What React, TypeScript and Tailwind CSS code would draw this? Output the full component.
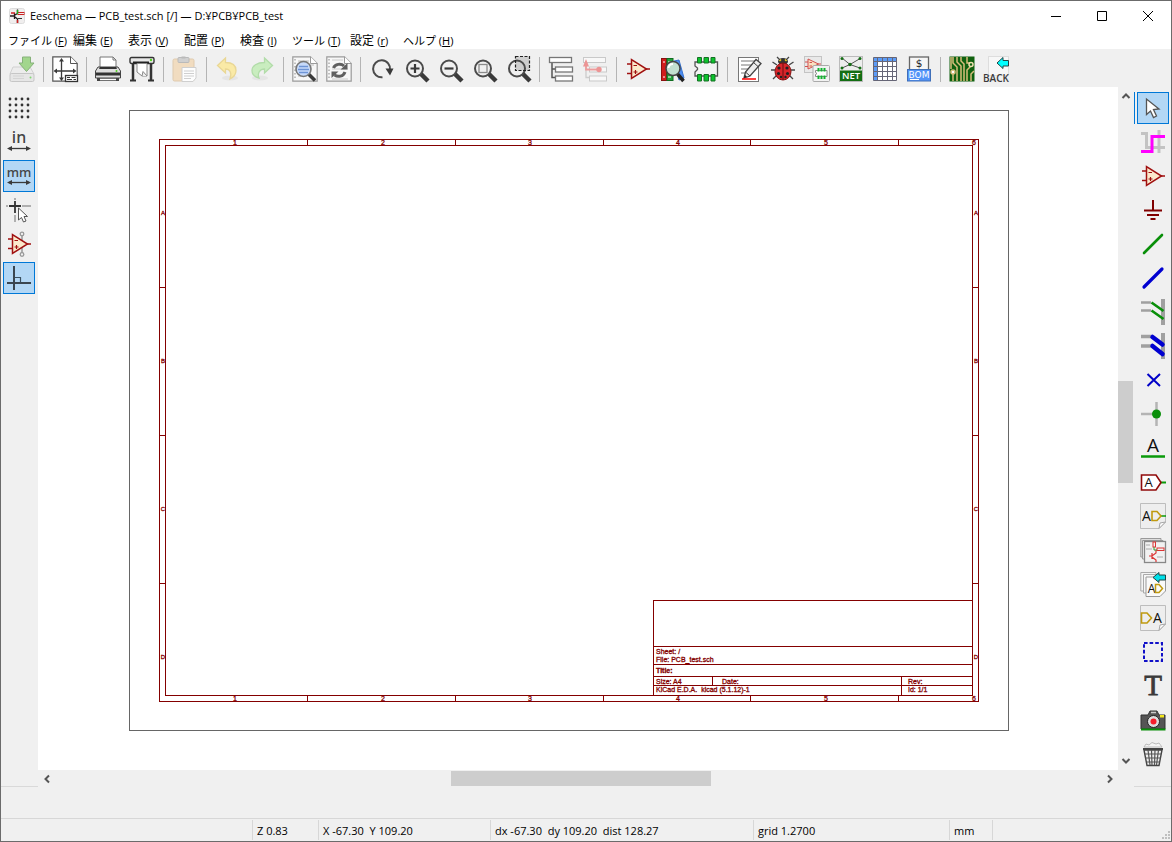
import type { ReactNode } from "react";

const DARK = "#3a3a3a";
const RED = "#a01010";
const MAROON = "#840000";

function Icon({ children }: { children: ReactNode }) {
  return (
    <svg viewBox="0 0 26 26" className="size-[26px] shrink-0 overflow-visible" fill="none" aria-hidden="true">
      {children}
    </svg>
  );
}

function Paper({ stroke = "#9a9a9a", fill = "#f7f7f7" }: { stroke?: string; fill?: string }) {
  return (
    <>
      <path d="M.8.8H18.500L25.200 7.500V25.200H.8Z" fill={fill} stroke={stroke} strokeWidth="1.200" />
      <path d="M18.500.8V7.500H25.200" fill="#fff" stroke={stroke} />
    </>
  );
}

function NotePaper() {
  return (
    <>
      <path d="M.5.5H25.500V19L19 25.500H.5Z" fill="#eee" stroke="#bdbdbd" />
      <path d="M25.500 19L19 25.500L20 20Z" fill="#fff" stroke="#a5a5a5" />
    </>
  );
}

function Lens({ children }: { children?: ReactNode }) {
  return (
    <>
      <path d="M18 18L25 25" stroke={DARK} strokeWidth="4.500" />
      <circle cx="12" cy="12.500" r="8" stroke="#4b4b4b" strokeWidth="2" />
      {children}
    </>
  );
}

function OpAmp() {
  return (
    <>
      <path d="M2 8H7M2 17.500H7M21 13H25" stroke={RED} strokeWidth="1.300" />
      <path d="M6.500 3.500V22.500L21.500 13Z" fill="#fbe9cc" stroke={RED} strokeWidth="1.500" />
      <path d="M8.500 9.500H12M8.500 16H12.500M10.500 14V18" stroke={RED} strokeWidth="1.200" />
    </>
  );
}

function MeasureArrow() {
  return (
    <>
      <path d="M3 19.500H23" stroke={DARK} strokeWidth="1.300" />
      <path d="M1 19.500L6 17V22ZM25 19.500L20 17V22Z" fill={DARK} />
    </>
  );
}

const icons = {
  save: (
    <Icon>
      <path d="M4 11H21L25 18H1Z" fill="#ececec" stroke="#d0d0d0" />
      <rect x="1" y="17.500" width="24" height="8" rx="1.500" fill="#e6e6e6" stroke="#c6c6c6" />
      <path d="M4 20H15M4 22.500H15" stroke="#d4d4d4" />
      <circle cx="21.500" cy="21.500" r="1" fill="#7fd873" />
      <path d="M13.500 1H21.500V7H25L17.500 15.500L10 7H13.500Z" fill="#a2d68d" stroke="#86b17a" />
    </Icon>
  ),
  page: (
    <Icon>
      <Paper stroke="#555" fill="#fff" />
      <path d="M3 15H22M9.500 4V23" stroke={DARK} strokeWidth="1.300" />
      <path d="M1.500 15L5 12.500V17.500ZM24.500 15L21 12.500V17.500ZM9.500 2L7 5.500H12ZM9.500 25L7 21.500H12Z" fill={DARK} />
      <rect x="13.500" y="19.500" width="12" height="6" fill="#fff" stroke="#333" strokeWidth="1.300" />
      <path d="M15 21.500H18M19.500 21.500H23.500M15 23.500H20M21.500 23.500H24" stroke="#333" />
    </Icon>
  ),
  print: (
    <Icon>
      <path d="M5 1H18L21 4V13H5Z" fill="#fff" stroke="#777" />
      <path d="M18 1V4H21" stroke="#777" />
      <path d="M3 11H23L25.500 15V22H.5V15Z" fill="#dedede" stroke="#444" />
      <path d="M4 13H22L21 11H5Z" fill="#333" />
      <rect x="1" y="16.500" width="24" height="3" fill="#333" />
      <circle cx="21.500" cy="15" r="1" fill="#50d020" />
      <path d="M2 22H24V25H2Z" fill="#444" />
      <path d="M5 23.500H21" stroke="#fff" strokeWidth="1.500" />
    </Icon>
  ),
  plot: (
    <Icon>
      <path d="M4 8V24M22 8V24" stroke="#333" strokeWidth="2.500" />
      <path d="M1 24.500H7M19 24.500H25" stroke="#333" strokeWidth="2" />
      <rect x="1" y="1.500" width="24" height="6" rx="1.500" fill="#e8e8e8" stroke="#333" strokeWidth="1.400" />
      <path d="M4 6.500H20" stroke="#222" strokeWidth="2" />
      <circle cx="22" cy="4" r="1.200" fill="#50d020" />
      <path d="M8 7.500H18V20H13L8 16Z" fill="#fff" stroke="#888" />
      <path d="M13 20L14 15.500L18 20" fill="#eee" stroke="#888" />
    </Icon>
  ),
  paste: (
    <Icon>
      <rect x="1" y="3" width="21" height="22" rx="1.500" fill="#f1dcc0" stroke="#dfcaae" />
      <rect x="6" y="1.500" width="11" height="5" rx="1" fill="#d0d0d0" stroke="#bababa" />
      <rect x="9.500" y=".5" width="4" height="2" fill="#bababa" />
      <path d="M10 11.500H24V22L21 25.500H10Z" fill="#fdfdfd" stroke="#cfcfcf" />
      <path d="M12 15H22M12 17.500H22M12 20H22M12 22.500H19" stroke="#cfcfcf" />
    </Icon>
  ),
  undo: (
    <Icon>
      <ellipse cx="15" cy="22" rx="8" ry="2.500" fill="#e5e5e5" />
      <path d="M2.500 9.500L10.500 2V6.500C18 6.500 21 10 21 14.500C21 18 19 21 15 23C17 17 15 13 10.500 13V17Z" fill="#faeaa6" stroke="#e9d795" strokeWidth="1.300" />
    </Icon>
  ),
  redo: (
    <Icon>
      <ellipse cx="11" cy="22" rx="8" ry="2.500" fill="#e5e5e5" />
      <path d="M23.500 9.500L15.500 2V6.500C8 6.500 3 10 3 14.500C3 18 6 21 10 22C8 17 11 13 15.500 13V17Z" fill="#c9edbf" stroke="#b2dca9" strokeWidth="1.300" />
    </Icon>
  ),
  find: (
    <Icon>
      <Paper />
      <path d="M3 3V24" stroke="#888" strokeDasharray="1.500 2" />
      <path d="M6 5H17M6 9H22M6 20H14" stroke="#bbb" />
      <path d="M16.500 18L23 24.500" stroke={DARK} strokeWidth="3.500" />
      <circle cx="11.500" cy="13" r="7.500" fill="#c7dafa" stroke="#777" strokeWidth="1.600" />
      <path d="M7 10.500H16M6 13.500H17M7 16.500H16" stroke="#6d94d6" strokeWidth="1.500" />
    </Icon>
  ),
  replace: (
    <Icon>
      <Paper />
      <path d="M3 3V24" stroke="#888" strokeDasharray="1.500 2" />
      <path d="M6 4H17M6 13H22M6 23H22" stroke="#ccc" />
      <path d="M7.500 12C9 8 15 7 18 10M19 16C17.500 20.500 12 21.500 8.500 19" stroke="#606060" strokeWidth="3" />
      <path d="M21.500 7V13.500H14.500ZM5.500 22V15.500H12.500Z" fill="#606060" />
    </Icon>
  ),
  redraw: (
    <Icon>
      <path d="M13.500 21.300A8.500 8.500 0 1 1 21 14" stroke="#4b4b4b" strokeWidth="2" />
      <path d="M16.500 12.500H24.500L21 19.500Z" fill={DARK} />
    </Icon>
  ),
  zoomIn: (
    <Icon>
      <Lens>
        <path d="M7.500 12.500H16.500M12 8V17" stroke={DARK} strokeWidth="2.200" />
      </Lens>
    </Icon>
  ),
  zoomOut: (
    <Icon>
      <Lens>
        <path d="M7.500 12.500H16.500" stroke={DARK} strokeWidth="2.200" />
      </Lens>
    </Icon>
  ),
  zoomFit: (
    <Icon>
      <Lens>
        <rect x="8" y="8.500" width="8" height="8" stroke="#8b8b8b" strokeWidth="1.300" />
      </Lens>
    </Icon>
  ),
  zoomArea: (
    <Icon>
      <rect x="10.500" y=".5" width="14" height="14" fill="#cfcfcf" />
      <Lens />
      <rect x="10.500" y=".5" width="14" height="14" stroke="#222" strokeWidth="1.200" strokeDasharray="3 1.500" />
    </Icon>
  ),
  hierarchy: (
    <Icon>
      <path d="M4 6V21.500H8M4 13H8" stroke="#555" strokeWidth="1.500" />
      <rect x="1.500" y="1.500" width="22" height="5" fill="#fff" stroke="#777" strokeWidth="1.300" />
      <rect x="7.500" y="11" width="17" height="5" fill="#fff" stroke="#777" strokeWidth="1.300" />
      <rect x="7.500" y="20" width="17" height="5" fill="#fff" stroke="#777" strokeWidth="1.300" />
    </Icon>
  ),
  leave: (
    <Icon>
      <path d="M4 6V21.500H8" stroke="#ccc" strokeWidth="1.300" />
      <rect x="1.500" y="1.500" width="22" height="5" fill="#f8f8f8" stroke="#c9c9c9" />
      <rect x="7.500" y="11" width="17" height="5" fill="#f8f8f8" stroke="#c9c9c9" />
      <rect x="7.500" y="20" width="17" height="5" fill="#f8f8f8" stroke="#c9c9c9" />
      <path d="M4 9V13.500H16" stroke="#ec9d9d" strokeWidth="1.800" />
      <path d="M4 3L1 10.500H7Z" fill="#ec9494" />
      <circle cx="17" cy="13.500" r="2.700" fill="#ec9494" />
    </Icon>
  ),
  opamp: (
    <Icon>
      <OpAmp />
    </Icon>
  ),
  library: (
    <Icon>
      <rect x="2.500" y="2.500" width="5" height="22" fill="#d01c1c" stroke="#8c1010" />
      <rect x="8" y="2.500" width="6" height="22" fill="#22a33a" stroke="#0f6d20" />
      <path d="M15 5L20 4L25 22L20 24Z" fill="#4c8cf0" stroke="#3772d0" />
      <path d="M4 6H6M9 6H12M4 21H6M9 21H12" stroke="#fff" />
      <path d="M18.500 18L24.500 25" stroke="#222" strokeWidth="3.500" />
      <circle cx="14" cy="12.500" r="7" fill="#c2dfd0" stroke="#444" strokeWidth="1.500" />
      <path d="M9.500 12A4.500 4.500 0 0 1 14 8" stroke="#fff" strokeWidth="2" />
    </Icon>
  ),
  footprint: (
    <Icon>
      <path d="M2 6H24.500V20H2V16L4.500 13.500V12L2 10Z" fill="#f4f4f4" stroke="#555" strokeWidth="1.300" />
      <path d="M4.500 1.500H8.500V7H4.500ZM11 1.500H15.500V7H11ZM18 1.500H22V7H18ZM4.500 18.500H8.500V25H4.500ZM11 18.500H15.500V25H11ZM18 18.500H22V25H18Z" fill="#0cc32c" stroke="#147024" />
    </Icon>
  ),
  annotate: (
    <Icon>
      <rect x="2.500" y="1.500" width="20" height="24" fill="#fff" stroke="#777" />
      <path d="M5 5H20M5 9H17M5 13H13M5 17H9" stroke="#777" />
      <path d="M8 22L9.500 16L20 3.500L25 7.500L14 20Z" fill="#eee" stroke="#444" strokeWidth="1.300" />
      <path d="M9.500 16L14 20M17.500 6.500L22 10.500" stroke="#444" />
      <path d="M8 22L9 19L11 20.500Z" fill="#222" />
      <path d="M6 23H20" stroke="red" strokeWidth="1.500" />
    </Icon>
  ),
  erc: (
    <Icon>
      <path d="M7 9L2.500 6M19 9L23.500 6M5 14H1M21 14H25M7 19L3 23M19 19L23 23M10 4L7 1M16 4L19 1" stroke="#444" strokeWidth="1.300" />
      <ellipse cx="13" cy="5.500" rx="5" ry="3.500" fill="#333" />
      <path d="M9.500 5L11 3.500M15 3.500L16.500 5" stroke="#f0d020" strokeWidth="1.500" />
      <ellipse cx="13" cy="15.500" rx="8" ry="8.500" fill="#d8242a" stroke="#811" />
      <path d="M13 7V24" stroke="#611" />
      <g fill="#222">
        <circle cx="9" cy="12" r="1.600" />
        <circle cx="17" cy="12" r="1.600" />
        <circle cx="8.500" cy="17.500" r="1.600" />
        <circle cx="17.500" cy="17.500" r="1.600" />
        <circle cx="11" cy="21" r="1.200" />
        <circle cx="15.500" cy="21" r="1.200" />
      </g>
    </Icon>
  ),
  assign: (
    <Icon>
      <rect x=".5" y=".5" width="17" height="16" fill="#e9e9e9" stroke="#c4c4c4" />
      <path d="M4 3V13L14.500 8ZM1 6H4M1 10.500H4M14 8H17" fill="#fbe0c0" stroke="#d25050" />
      <path d="M5.500 6.500H8M5.500 10H8" stroke="#d25050" />
      <rect x="9" y="9.500" width="16.500" height="16" rx="1" fill="#f2f2f2" stroke="#aaa" />
      <path d="M11.500 14.500H23V20.500H11.500V18.500L13 17.500L11.500 16.500Z" fill="#fff" stroke="#888" />
      <path d="M14.500 12V15.500M17.500 12V15.500M20.500 12V15.500M14.500 19.500V23M17.500 19.500V23M20.500 19.500V23" stroke="#12b530" strokeWidth="2" />
    </Icon>
  ),
  netlist: (
    <Icon>
      <rect x="1.500" y=".5" width="23" height="25" fill="#eee" stroke="#bbb" />
      <path d="M4 2L12 8.500L23 2M4 12L12 8.500L22 12" stroke="#555" />
      <g fill="#146e14">
        <circle cx="4" cy="2.500" r="1.500" />
        <circle cx="22" cy="2.500" r="1.500" />
        <circle cx="12" cy="8.500" r="1.700" />
        <circle cx="4" cy="12" r="1.500" />
        <circle cx="22" cy="12" r="1.500" />
        <rect x="2" y="14.500" width="22" height="10.500" />
      </g>
      <text x="13" y="23.300" textAnchor="middle" fill="#fff" fontSize="9.500" fontWeight="600" fontFamily="Open Sans, sans-serif">NET</text>
    </Icon>
  ),
  table: (
    <Icon>
      <rect x="1.500" y="1.500" width="23" height="23" fill="#fff" />
      <path d="M1.500 1.500H24.500V5.500H5.500V24.500H1.500Z" fill="#5c9cf8" />
      <path d="M1.500 1.500H24.500V24.500H1.500ZM5.500 1.500V24.500M10.500 1.500V24.500M15.500 1.500V24.500M20.500 1.500V24.500M1.500 5.500H24.500M1.500 10.500H24.500M1.500 15.500H24.500M1.500 20.500H24.500" stroke="#667" />
    </Icon>
  ),
  bom: (
    <Icon>
      <rect x="3.500" y="1" width="19" height="13" fill="#f6f6f6" stroke="#666" strokeWidth="1.300" />
      <text x="13" y="11" textAnchor="middle" fill="#222" fontSize="10.500" fontFamily="DejaVu Sans, sans-serif">$</text>
      <rect x="1.500" y="13.500" width="23" height="11.500" fill="#5494f8" stroke="#3f6fb8" />
      <text x="13" y="22" textAnchor="middle" fill="#fff" fontSize="9" fontFamily="DejaVu Sans, sans-serif">BOM</text>
      <path d="M4 23.500H13" stroke="#fff" />
    </Icon>
  ),
  pcb: (
    <Icon>
      <rect x=".5" y=".5" width="25" height="25" fill="#10610f" />
      <path d="M4 1V7L8 11V25M8 1V6L12 10V25M12 1V5L15 8V25M18 25V14L22 10M22 25V18L25 15M18 1V7H21M2 1V13M4 17V25" stroke="#d8bd7c" strokeWidth="1.500" />
      <circle cx="22" cy="8.500" r="2" fill="#10610f" stroke="#efe0b0" strokeWidth="1.500" />
      <circle cx="4" cy="16" r="2" fill="#fff" stroke="#d8bd7c" strokeWidth="1.500" />
    </Icon>
  ),
  back: (
    <Icon>
      <rect x="5.500" y=".5" width="20" height="19" fill="#f7f7f7" stroke="#ddd" />
      <path d="M14 7L20 1.500V4.500H25.500V10H20V12.500Z" fill="#0ff" stroke="#244" />
      <text x="13" y="25.500" textAnchor="middle" fill="#3b3b3b" fontSize="10" fontWeight="600" fontFamily="Open Sans, sans-serif">BACK</text>
    </Icon>
  ),
  grid: (
    <Icon>
      {[4, 10, 16, 22].map((y) =>
        [4, 10, 16, 22].map((x) => <circle key={`${x}-${y}`} cx={x} cy={y} r="1.400" fill="#333" />),
      )}
    </Icon>
  ),
  inch: (
    <Icon>
      <text x="13" y="14" textAnchor="middle" fill="#444" fontSize="16" fontFamily="Noto Sans, sans-serif" fontWeight="500">in</text>
      <MeasureArrow />
    </Icon>
  ),
  mm: (
    <Icon>
      <text x="13" y="14" textAnchor="middle" fill="#444" fontSize="13" fontFamily="Noto Sans, sans-serif" fontWeight="500">mm</text>
      <MeasureArrow />
    </Icon>
  ),
  cursorShape: (
    <Icon>
      <path d="M0 9H2M16 9H25M9 18V25M9 1V3" stroke="#999" strokeWidth="1.500" />
      <path d="M3 9H15M9 4V16" stroke="#333" strokeWidth="1.800" />
      <path d="M12.500 11V23L15.500 20.500L17.500 25L20 24L18 19.500H21.500Z" fill="#fff" stroke="#555" />
    </Icon>
  ),
  hiddenPins: (
    <Icon>
      <path d="M16 4V22" stroke="#999" strokeWidth="1.500" />
      <circle cx="16" cy="3" r="1.800" stroke="#999" strokeWidth="1.300" />
      <circle cx="16" cy="23.500" r="1.800" stroke="#999" strokeWidth="1.300" />
      <OpAmp />
    </Icon>
  ),
  ortho: (
    <Icon>
      <path d="M8 1V25M1 18H25" stroke="#3b4650" strokeWidth="2" />
      <path d="M9 12.500H14.500V17.500" stroke="#3b5060" strokeWidth="1.200" />
    </Icon>
  ),
  select: (
    <Icon>
      <path d="M6.500 4V19.500L10.500 16L13.500 22.500L16.500 21L13.500 14.500L19 14Z" fill="#fff" stroke="#555" strokeWidth="1.300" />
    </Icon>
  ),
  highlight: (
    <Icon>
      <path d="M1 4.500H6.500V18.500H25M19 1V24" stroke="#c3c3c3" strokeWidth="3" />
      <path d="M1 22.500H12V7.500H25" stroke="#f0f" strokeWidth="3" />
    </Icon>
  ),
  power: (
    <Icon>
      <path d="M13 3V14M4 13.500H22M7 18H19M10.500 22H15.500" stroke="#800000" strokeWidth="2" />
    </Icon>
  ),
  wire: (
    <Icon>
      <path d="M4 22L22 4" stroke="#098f09" strokeWidth="2.600" strokeLinecap="round" />
    </Icon>
  ),
  bus: (
    <Icon>
      <path d="M4 22L22 4" stroke="#0000d0" strokeWidth="3.200" strokeLinecap="round" />
    </Icon>
  ),
  wireEntry: (
    <Icon>
      <path d="M1 3.500H11M1 11.500H11" stroke="#a0a0a0" strokeWidth="2.500" />
      <path d="M23 0V26" stroke="#a0a0a0" strokeWidth="4" />
      <path d="M11.500 3.500L23.500 12M11.500 11.500L23.500 20" stroke="#098f09" strokeWidth="2.600" />
    </Icon>
  ),
  busEntry: (
    <Icon>
      <path d="M1 3.500H11M1 13H11" stroke="#a0a0a0" strokeWidth="3.500" />
      <path d="M23 0V26" stroke="#a0a0a0" strokeWidth="4" />
      <path d="M12.500 4L22.500 11.500M12.500 13L22.500 21" stroke="#0000d0" strokeWidth="4.500" strokeLinecap="round" />
    </Icon>
  ),
  noConnect: (
    <Icon>
      <path d="M7.500 7L20 19M20 7L7.500 19" stroke="#0000c8" strokeWidth="2" />
    </Icon>
  ),
  junction: (
    <Icon>
      <path d="M1 13H16M16.500 1V25" stroke="#b4b4b4" strokeWidth="2.500" />
      <circle cx="16.500" cy="13" r="4.500" fill="#0a8f0a" />
    </Icon>
  ),
  label: (
    <Icon>
      <text x="13" y="17" textAnchor="middle" fill="#111" fontSize="19" fontFamily="Open Sans, sans-serif">A</text>
      <path d="M1 21.500H25" stroke="#0a9a0a" strokeWidth="2.500" />
    </Icon>
  ),
  globalLabel: (
    <Icon>
      <path d="M21 13.500H26" stroke="#0a9a0a" strokeWidth="2" />
      <path d="M1.500 6H16L21 13.500L16 21H1.500Z" fill="#fff" stroke="#900a0a" strokeWidth="1.600" />
      <text x="8.500" y="18" textAnchor="middle" fill="#111" fontSize="13" fontFamily="Open Sans, sans-serif">A</text>
    </Icon>
  ),
  hierLabel: (
    <Icon>
      <NotePaper />
      <text x="6.500" y="18" textAnchor="middle" fill="#111" fontSize="14" fontFamily="Open Sans, sans-serif">A</text>
      <path d="M21 13H26" stroke="#0a9a0a" strokeWidth="1.500" />
      <path d="M12 8.500H17L21 13L17 17.500H12Z" stroke="#c09a10" strokeWidth="1.600" />
    </Icon>
  ),
  sheet: (
    <Icon>
      <path d="M.8 1.500H21V20H.8Z" fill="#ddd" stroke="#999" />
      <path d="M2.500 3.500H23V22H2.500Z" fill="#eee" stroke="#999" />
      <rect x="4.500" y="4.500" width="21" height="21" fill="#f1f1f1" stroke="#888" strokeWidth="1.300" />
      <path d="M12 16V22M9 19H12L16 16V13M12 20L16 23V25" stroke="#d33" strokeWidth="1.200" />
      <rect x="17" y="11" width="7" height="2.500" stroke="#d33" />
      <rect x="13" y="5" width="2.500" height="5" stroke="#d33" />
      <path d="M6 12H12M17 20H23M6 8H10" stroke="#aaa" />
      <path d="M14 10V13H17" stroke="#393" />
    </Icon>
  ),
  importLabel: (
    <Icon>
      <path d="M.8 1.500H16V20H.8Z" fill="#f4f4f4" stroke="#aaa" />
      <path d="M3.500 3.500H18V22H3.500Z" fill="#f6f6f6" stroke="#aaa" />
      <path d="M6 6H25.500V20L20 25.500H6Z" fill="#fafafa" stroke="#999" />
      <text x="11.500" y="22" textAnchor="middle" fill="#111" fontSize="12" fontFamily="Open Sans, sans-serif">A</text>
      <path d="M15.500 13.500H19L22.500 17.500L19 21.500H15.500Z" stroke="#c09a10" strokeWidth="1.500" />
      <path d="M13 6.500L19 1.500V4H25.500V9H19V11.500Z" fill="#00dfe8" stroke="#244" />
    </Icon>
  ),
  sheetPin: (
    <Icon>
      <NotePaper />
      <path d="M1.500 8H7L11.500 13L7 18H1.500Z" stroke="#c09a10" strokeWidth="1.600" />
      <text x="17.500" y="18" textAnchor="middle" fill="#111" fontSize="14" fontFamily="Open Sans, sans-serif">A</text>
    </Icon>
  ),
  dashedBox: (
    <Icon>
      <path d="M4 4H22V22H4Z" stroke="#1010c8" strokeWidth="2" strokeDasharray="3.600 2" />
    </Icon>
  ),
  text: (
    <Icon>
      <text x="13" y="22" textAnchor="middle" fill="#3a3a3a" fontSize="29" fontFamily="Liberation Serif, serif" stroke="#3a3a3a" strokeWidth=".8">T</text>
    </Icon>
  ),
  image: (
    <Icon>
      <path d="M1 8H8L10 4H17L19 8H25V22H1Z" fill="#555" stroke="#333" />
      <path d="M11 5.500H16" stroke="#ccc" strokeWidth="1.500" />
      <rect x="20" y="8" width="4" height="2.500" fill="#f3e61a" />
      <circle cx="13.500" cy="14.500" r="6" fill="#ddd" stroke="#222" />
      <circle cx="13.500" cy="14.500" r="3" fill="#f51d2b" />
      <path d="M1 22.500H25.500" stroke="#0a8f0a" strokeWidth="2" />
    </Icon>
  ),
  trash: (
    <Icon>
      <path d="M4 6L6 3L9 4L12 1.500L16 3L19 2L22 6Z" fill="#f6f6f6" stroke="#bbb" />
      <path d="M3 8H23" stroke="#444" strokeWidth="2" />
      <path d="M4 9L7 24.500H19L22 9Z" fill="#eee" stroke="#444" strokeWidth="1.400" />
      <path d="M8 9L10 24M11.500 9L12 24M15 9L14.500 24M18.500 9L16.500 24M5 13H21M5.500 17H20.500M6.500 21H20" stroke="#555" strokeWidth="1.200" />
    </Icon>
  ),
};

type IconName = keyof typeof icons;
type Tool = { icon: IconName; label: string; active?: boolean; disabled?: boolean };

const toolGroups: Tool[][] = [
  [{ icon: "save", label: "Save", disabled: true }],
  [{ icon: "page", label: "Page settings" }],
  [{ icon: "print", label: "Print" }, { icon: "plot", label: "Plot" }],
  [{ icon: "paste", label: "Paste", disabled: true }],
  [{ icon: "undo", label: "Undo", disabled: true }, { icon: "redo", label: "Redo", disabled: true }],
  [{ icon: "find", label: "Find" }, { icon: "replace", label: "Find and replace" }],
  [
    { icon: "redraw", label: "Refresh" },
    { icon: "zoomIn", label: "Zoom in" },
    { icon: "zoomOut", label: "Zoom out" },
    { icon: "zoomFit", label: "Zoom to fit" },
    { icon: "zoomArea", label: "Zoom to selection" },
  ],
  [{ icon: "hierarchy", label: "Navigate hierarchy" }, { icon: "leave", label: "Leave sheet", disabled: true }],
  [
    { icon: "opamp", label: "Symbol editor" },
    { icon: "library", label: "Symbol library browser" },
    { icon: "footprint", label: "Footprint editor" },
  ],
  [
    { icon: "annotate", label: "Annotate" },
    { icon: "erc", label: "Electrical rules check" },
    { icon: "assign", label: "Assign footprints" },
    { icon: "netlist", label: "Generate netlist" },
    { icon: "table", label: "Edit symbol fields" },
    { icon: "bom", label: "Bill of materials" },
  ],
  [{ icon: "pcb", label: "Open PCB editor" }, { icon: "back", label: "Back import" }],
];

const leftTools: Tool[] = [
  { icon: "grid", label: "Show grid" },
  { icon: "inch", label: "Inches" },
  { icon: "mm", label: "Millimeters", active: true },
  { icon: "cursorShape", label: "Cursor shape" },
  { icon: "hiddenPins", label: "Show hidden pins" },
  { icon: "ortho", label: "Horizontal and vertical wires only", active: true },
];

const rightTools: Tool[] = [
  { icon: "select", label: "Select", active: true },
  { icon: "highlight", label: "Highlight net" },
  { icon: "opamp", label: "Place symbol" },
  { icon: "power", label: "Place power port" },
  { icon: "wire", label: "Place wire" },
  { icon: "bus", label: "Place bus" },
  { icon: "wireEntry", label: "Wire to bus entry" },
  { icon: "busEntry", label: "Bus to bus entry" },
  { icon: "noConnect", label: "No connect flag" },
  { icon: "junction", label: "Place junction" },
  { icon: "label", label: "Net label" },
  { icon: "globalLabel", label: "Global label" },
  { icon: "hierLabel", label: "Hierarchical label" },
  { icon: "sheet", label: "Hierarchical sheet" },
  { icon: "importLabel", label: "Import hierarchical label" },
  { icon: "sheetPin", label: "Sheet pin" },
  { icon: "dashedBox", label: "Graphic lines" },
  { icon: "text", label: "Text" },
  { icon: "image", label: "Image" },
  { icon: "trash", label: "Delete" },
];

const menus = [
  { name: "ファイル", key: "F", className: "w-[65px] text-[11px]" },
  { name: "編集", key: "E", className: "w-[55px] text-xs" },
  { name: "表示", key: "V", className: "w-[56px] text-xs" },
  { name: "配置", key: "P", className: "w-[56px] text-xs" },
  { name: "検査", key: "I", className: "w-[52px] text-xs" },
  { name: "ツール", key: "T", className: "w-[58px] text-[11px]" },
  { name: "設定", key: "r", className: "w-[53px] text-xs" },
  { name: "ヘルプ", key: "H", className: "w-[65px] text-[11px]" },
];

const statusCells = [
  { text: "", className: "w-[251px]" },
  { text: "Z 0.83", className: "w-[66px]" },
  { text: "X -67.30  Y 109.20", className: "w-[172px]" },
  { text: "dx -67.30  dy 109.20  dist 128.27", className: "w-[263px]" },
  { text: "grid 1.2700", className: "w-[196px]" },
  { text: "mm", className: "w-[43px]" },
];

function SideButton({ tool }: { tool: Tool }) {
  const state = tool.active ? "border-[#0078d7] bg-[#b3d7f5]" : "border-transparent";
  return (
    <button
      type="button"
      aria-label={tool.label}
      aria-pressed={!!tool.active}
      className={`flex size-8 items-center justify-center border ${state}`}
    >
      {icons[tool.icon]}
    </button>
  );
}

function ScrollArrow({ label, d, className }: { label: string; d: string; className: string }) {
  return (
    <button type="button" aria-label={label} className={`flex shrink-0 items-center justify-center ${className}`}>
      <svg viewBox="0 0 10 10" className="size-2.5" fill="none" stroke="#555" strokeWidth="2" aria-hidden="true">
        <path d={d} />
      </svg>
    </button>
  );
}

function Sheet() {
  const columns = [197, 345, 492, 640, 788, 936];
  const rows = [126, 274, 422, 570];
  const rowNames = ["A", "B", "C", "D"];
  return (
    <svg viewBox="0 0 1080 683" className="h-full w-full" role="img" aria-label="Schematic sheet">
      <g fill="none" shapeRendering="crispEdges">
        <rect x="91.500" y="23.500" width="879" height="620" stroke="#666" />
        <g stroke={MAROON}>
          <rect x="121.500" y="52.500" width="819" height="562" />
          <rect x="127.500" y="58.500" width="807" height="550" />
          {[269.5, 417.5, 565.5, 712.5, 860.5].map((x) => (
            <path key={x} d={`M${x} 52V59M${x} 608V615`} />
          ))}
          {[200.5, 348.5, 496.5].map((y) => (
            <path key={y} d={`M121 ${y}H128M934 ${y}H941`} />
          ))}
          <path d="M615.500 609V513.500H935M615 559.500H935M615 577.500H935M615 589.500H935M615 598.500H935M674.500 589V599M863.500 589V609" />
        </g>
      </g>
      <g fill={MAROON} stroke={MAROON} strokeWidth="0.300" fontFamily="Liberation Sans, sans-serif" fontSize="7">
        {columns.map((x, i) => (
          <g key={x} textAnchor="middle">
            <text x={x} y="58">{i + 1}</text>
            <text x={x} y="614">{i + 1}</text>
          </g>
        ))}
        {rows.map((y, i) => (
          <g key={y} textAnchor="middle" fontSize="6">
            <text x="125" y={y + 2}>{rowNames[i]}</text>
            <text x="938" y={y + 2}>{rowNames[i]}</text>
          </g>
        ))}
        <text x="618" y="567">Sheet:&nbsp;/</text>
        <text x="618" y="575">File: PCB_test.sch</text>
        <text x="618" y="586" fontWeight="700">Title:</text>
        <text x="618" y="597">Size: A4</text>
        <text x="684" y="597">Date:</text>
        <text x="870" y="597">Rev:</text>
        <text x="618" y="605">KiCad E.D.A.&nbsp;&nbsp;kicad (5.1.12)-1</text>
        <text x="870" y="605">Id: 1/1</text>
      </g>
    </svg>
  );
}

function TitleBar() {
  return (
    <header className="flex h-[30px] items-center bg-white pl-2">
      <svg viewBox="0 0 16 16" className="size-4" fill="none" aria-hidden="true">
        <rect x=".5" y=".5" width="15" height="15" rx="2" fill="#f0eeee" stroke="#ddd" />
        <path d="M1 8H5M5.500 5V11M6 7L8.500 5.500V1.500M6 9L8.500 11V15" stroke="#1f1a1a" strokeWidth="1.300" />
        <rect x="9" y="4.500" width="6" height="2" stroke="#c22" />
        <path d="M2 5H6M8.500 12V15" stroke="#c22" strokeWidth="1.500" />
        <path d="M8.500 2V5.500H9" stroke="#2a2" strokeWidth="1.500" />
        <path d="M9 10.500H13" stroke="#333" />
      </svg>
      <h1 className="ml-[5px] flex-1 text-[11px]">Eeschema — PCB_test.sch [/] — D:¥PCB¥PCB_test</h1>
      {[
        { label: "Minimize", d: "M0 5.500H10" },
        { label: "Maximize", d: "M.5.5H9.500V9.500H.5Z" },
        { label: "Close", d: "M0 0L10 10M10 0L0 10" },
      ].map((b) => (
        <button key={b.label} type="button" aria-label={b.label} className="flex h-full w-[46px] items-center justify-center">
          <svg viewBox="0 0 10 10" className="size-2.5 overflow-visible" fill="none" stroke="#000" aria-hidden="true">
            <path d={b.d} />
          </svg>
        </button>
      ))}
    </header>
  );
}

export default function App() {
  return (
    <div className="flex min-h-screen flex-col border border-[#6b6b6b] bg-[#f0f0f0] font-['Open_Sans','Noto_Sans_CJK_JP',sans-serif] text-xs text-black">
      <TitleBar />
      <nav className="flex h-[18px] items-center bg-white pt-0.5 pl-[7px]">
        {menus.map((m) => (
          <button key={m.key} type="button" className={`shrink-0 text-left whitespace-nowrap ${m.className}`}>
            {m.name} <span className="text-[11px]">(<u>{m.key}</u>)</span>
          </button>
        ))}
      </nav>
      <div className="flex h-[38px] items-end pb-0.5 pl-1" role="toolbar" aria-label="Main">
        {toolGroups.map((group, g) => (
          <div key={group[0].icon} className="flex items-center">
            {g > 0 && <span className="mx-1 h-[25px] w-px bg-[#b4b4b4]" />}
            {group.map((t) => (
              <button
                key={t.icon}
                type="button"
                aria-label={t.label}
                disabled={t.disabled}
                className="flex h-8 w-[34px] items-center justify-center"
              >
                {icons[t.icon]}
              </button>
            ))}
          </div>
        ))}
      </div>
      <main className="flex flex-1">
        <div className="flex w-[37px] shrink-0 flex-col gap-0.5 border-b border-[#d9d9d9] pt-[5px] pl-0.5" role="toolbar" aria-label="Display">
          {leftTools.map((t) => (
            <SideButton key={t.icon} tool={t} />
          ))}
        </div>
        <div className="flex min-w-0 flex-1 flex-col">
          <div className="flex min-h-0 flex-1">
            <div className="min-w-0 flex-1 bg-white">
              <Sheet />
            </div>
            <div className="flex w-4 flex-col pr-px">
              <ScrollArrow label="Scroll up" d="M1.500 7L5 3.500L8.500 7" className="h-[18px]" />
              <div className="flex-[276]" />
              <div className="flex-[102] bg-[#cdcdcd]" />
              <div className="flex-[269]" />
              <ScrollArrow label="Scroll down" d="M1.500 3L5 6.500L8.500 3" className="h-[18px]" />
            </div>
          </div>
          <div className="flex h-[17px] py-px pr-4">
            <ScrollArrow label="Scroll left" d="M7 1.500L3.500 5L7 8.500" className="w-[17px]" />
            <div className="flex-[396]" />
            <div className="flex-[260] bg-[#cdcdcd]" />
            <div className="flex-[390]" />
            <ScrollArrow label="Scroll right" d="M3 1.500L6.500 5L3 8.500" className="w-[17px]" />
          </div>
        </div>
        <div className="flex w-[37px] shrink-0 flex-col gap-0.5 border-b border-[#d9d9d9] pt-[5px]" role="toolbar" aria-label="Drawing">
          {rightTools.map((t) => (
            <div key={t.icon} className={`border-l pl-0.5 ${t.active ? "border-[#0078d7]" : "border-transparent"}`}>
              <SideButton tool={t} />
            </div>
          ))}
        </div>
      </main>
      <div className="h-[31px]" />
      <footer className="flex h-[23px] border-t border-[#d7d7d7] py-px text-[11px]">
        {statusCells.map((c, i) => (
          <div key={i} className={`flex shrink-0 items-center pt-0.5 whitespace-pre ${i > 0 ? "border-l border-[#d7d7d7] pl-1" : ""} ${c.className}`}>
            {c.text}
          </div>
        ))}
        <div className="flex flex-1 items-end justify-end border-l border-[#d7d7d7]">
          <svg viewBox="0 0 10 10" className="size-2.5" fill="#bfbfbf" aria-hidden="true">
            <path d="M7 1H9V3H7ZM4 4H6V6H4ZM7 4H9V6H7ZM1 7H3V9H1ZM4 7H6V9H4ZM7 7H9V9H7Z" />
          </svg>
        </div>
      </footer>
    </div>
  );
}
